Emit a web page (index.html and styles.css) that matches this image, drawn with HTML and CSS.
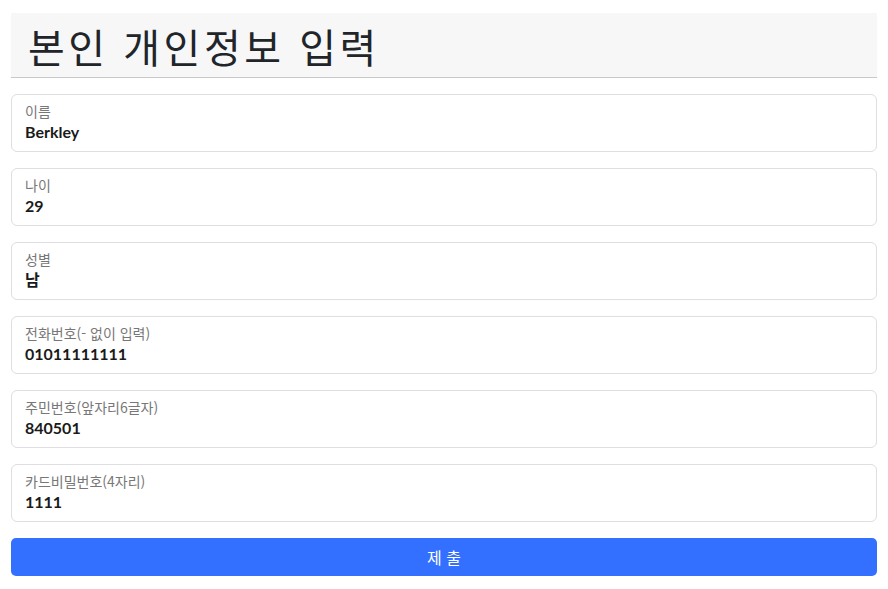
FILE: index.html
```html
<!DOCTYPE html>
<html lang="ko">
<head>
<meta charset="utf-8">
<link rel="stylesheet" href="styles.css">
</head>
<body>
<div class="page">
  <header class="header"><h1 class="title">본인 개인정보 입력</h1></header>
  <form class="form">
    <div class="field"><div class="label">이름</div><div class="value">Berkley</div></div>
    <div class="field"><div class="label">나이</div><div class="value">29</div></div>
    <div class="field"><div class="label">성별</div><div class="value">남</div></div>
    <div class="field"><div class="label">전화번호(- 없이 입력)</div><div class="value">01011111111</div></div>
    <div class="field"><div class="label">주민번호(앞자리6글자)</div><div class="value">840501</div></div>
    <div class="field"><div class="label">카드비밀번호(4자리)</div><div class="value">1111</div></div>
    <button type="button" class="submit">제 출</button>
  </form>
</div>
</body>
</html>
```
FILE: styles.css
```css
* { box-sizing: border-box; }
body {
  margin: 0;
  background: #fff;
  font-family: "Lato", "Noto Sans CJK KR", sans-serif;
  color: #212529;
}
.page {
  padding: 13px 11px;
}
.header {
  background: #f7f7f7;
  border-bottom: 1px solid #c8c8c8;
  height: 65px;
  padding: 0 17px;
  display: flex;
  align-items: center;
}
.title {
  margin: 0;
  font-family: "Noto Sans CJK KR", sans-serif;
  font-weight: 400;
  font-size: 40px;
  letter-spacing: 3.5px;
  color: #212529;
  line-height: 1;
  padding-top: 2px;
}
.form {
  display: flex;
  flex-direction: column;
  gap: 16px;
  margin-top: 16px;
}
.field {
  height: 58px;
  border: 1px solid #dedee3;
  border-radius: 6px;
  padding: 7px 13px 0;
}
.label {
  font-family: "Noto Sans CJK KR", sans-serif;
  font-size: 14px;
  color: #777;
  line-height: 19px;
}
.value {
  font-family: "Lato", "Noto Sans CJK KR", sans-serif;
  font-weight: 700;
  font-size: 16px;
  color: #1a1a1a;
  line-height: 22px;
}
.submit {
  height: 38px;
  border: none;
  border-radius: 5px;
  background: #3370ff;
  color: #fff;
  font-family: "Noto Sans CJK KR", sans-serif;
  font-size: 16px;
  width: 100%;
}
```
